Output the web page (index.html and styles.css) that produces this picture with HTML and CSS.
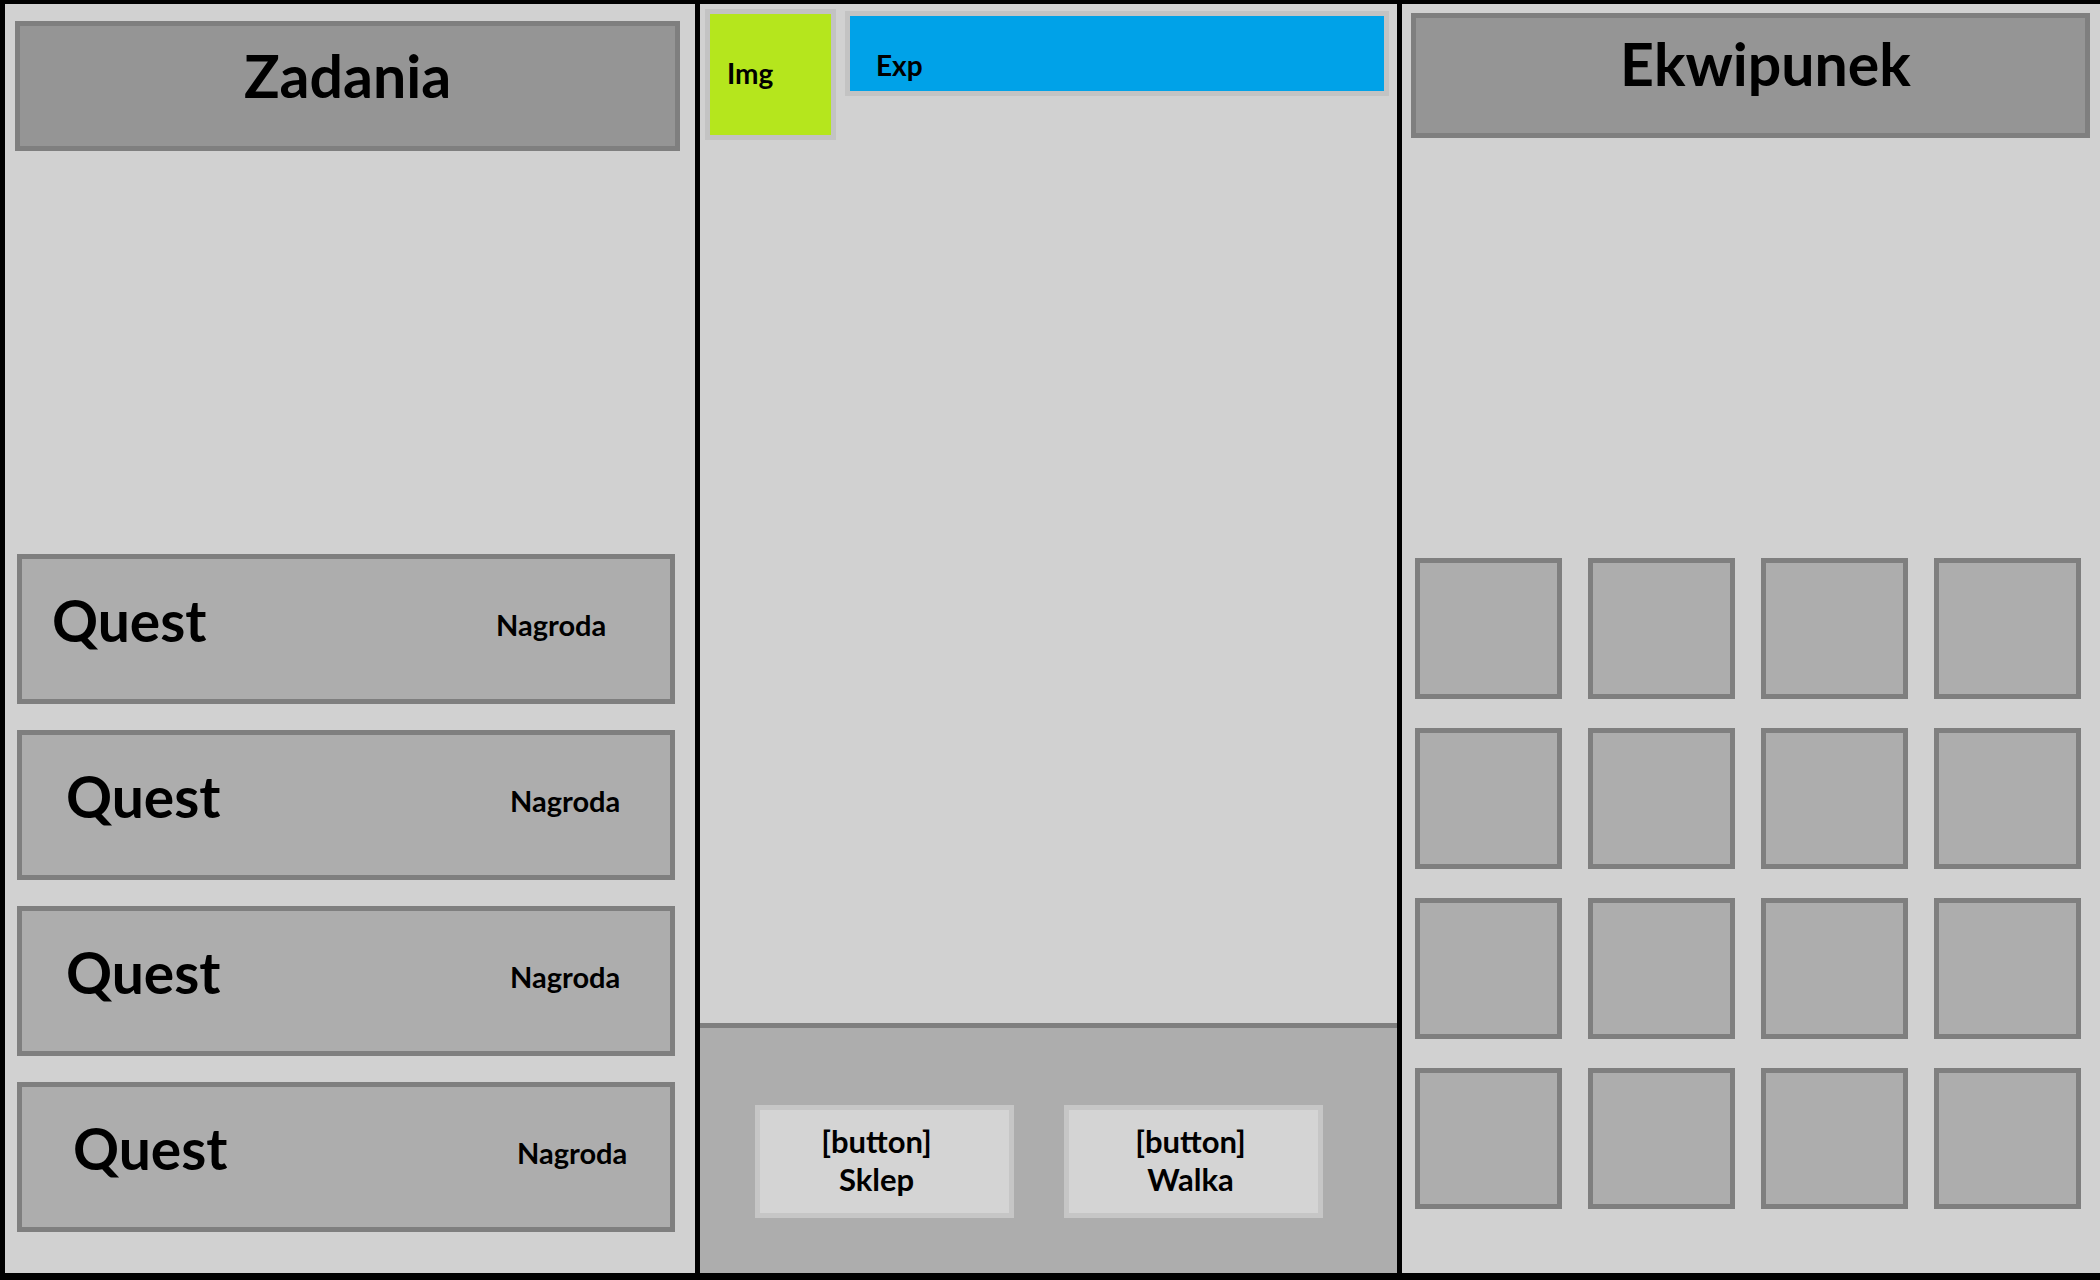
FILE: index.html
```html
<!DOCTYPE html>
<html lang="pl">
<head>
<meta charset="utf-8">
<title>Gra - makieta</title>
<link rel="stylesheet" href="styles.css">
</head>
<body>
<div class="app">
  <section class="col col-left">
    <header class="panel-title title-quests">Zadania</header>
    <div class="quests">
      <div class="quest q1"><span class="quest-name">Quest</span><span class="quest-reward">Nagroda</span></div>
      <div class="quest q2"><span class="quest-name">Quest</span><span class="quest-reward">Nagroda</span></div>
      <div class="quest q3"><span class="quest-name">Quest</span><span class="quest-reward">Nagroda</span></div>
      <div class="quest q4"><span class="quest-name">Quest</span><span class="quest-reward">Nagroda</span></div>
    </div>
  </section>
  <section class="col col-mid">
    <div class="hero">
      <div class="avatar">Img</div>
      <div class="exp">Exp</div>
    </div>
    <div class="actions">
      <div class="btn btn-shop">[button]<br>Sklep</div>
      <div class="btn btn-fight">[button]<br>Walka</div>
    </div>
  </section>
  <section class="col col-right">
    <header class="panel-title title-inv">Ekwipunek</header>
    <div class="inventory">
      <div class="slot"></div><div class="slot"></div><div class="slot"></div><div class="slot"></div>
      <div class="slot"></div><div class="slot"></div><div class="slot"></div><div class="slot"></div>
      <div class="slot"></div><div class="slot"></div><div class="slot"></div><div class="slot"></div>
      <div class="slot"></div><div class="slot"></div><div class="slot"></div><div class="slot"></div>
    </div>
  </section>
</div>
</body>
</html>
```
FILE: styles.css
```css
* { box-sizing: border-box; }

html, body {
  margin: 0;
  padding: 0;
  background: #d1d1d1;
}

body {
  font-family: Lato, "Open Sans", "Noto Sans", sans-serif;
  font-weight: 700;
  color: #000;
}

.app {
  display: flex;
  width: 2100px;
  height: 1280px;
  border-top: 4px solid #000;
  border-left: 5px solid #000;
  border-bottom: 7px solid #000;
  background: #d1d1d1;
}

.col {
  display: flex;
  flex-direction: column;
  height: 100%;
}

.col-left {
  width: 695px;
  border-right: 5px solid #000;
}

.col-mid {
  width: 702px;
  border-right: 5px solid #000;
}

.col-right {
  width: 698px;
}

/* titles */
.panel-title {
  display: flex;
  align-items: center;
  justify-content: center;
  background: #959595;
  border: 5px solid #7f7f7f;
  font-size: 59px;
  line-height: 1.2;
}

.title-quests {
  height: 130px;
  margin: 17px 15px 0 10px;
  padding-bottom: 20px;
}

.title-inv {
  height: 125px;
  margin: 9px 10px 0 9px;
  padding-bottom: 23px;
  padding-left: 30px;
}

/* quests */
.quests {
  margin-top: auto;
  display: flex;
  flex-direction: column;
  gap: 26px;
  padding: 0 20px 41px 12px;
}

.quest {
  height: 150px;
  display: flex;
  align-items: center;
  background: #adadad;
  border: 5px solid #7f7f7f;
}

.q1 { padding-left: 30px; }
.q2 { padding-left: 44px; }
.q3 { padding-left: 44px; }
.q4 { padding-left: 51px; }

.quest-name {
  width: 444px;
  flex: none;
  font-size: 57px;
  line-height: 1.2;
  padding-bottom: 18px;
}

.quest-reward {
  font-size: 29px;
  line-height: 1.2;
  padding-bottom: 8px;
}

/* middle */
.hero {
  display: flex;
  align-items: flex-start;
  gap: 9px;
  padding: 5px 8px 0 5px;
}

.avatar {
  width: 131px;
  height: 131px;
  flex: none;
  display: flex;
  align-items: center;
  padding: 0 0 2px 17px;
  background: #b5e61d;
  border: 5px solid #c3c3c3;
  font-size: 28px;
  line-height: 1.2;
}

.exp {
  flex: 1;
  height: 85px;
  margin-top: 2px;
  display: flex;
  align-items: flex-end;
  padding: 0 0 8px 26px;
  background: #00a2e8;
  border: 5px solid #c3c3c3;
  font-size: 28px;
  line-height: 1.2;
}

.actions {
  margin-top: auto;
  height: 250px;
  display: flex;
  align-items: flex-start;
  gap: 50px;
  padding: 77px 0 0 55px;
  background: #adadad;
  border-top: 5px solid #7f7f7f;
}

.btn {
  width: 259px;
  height: 113px;
  display: flex;
  align-items: center;
  justify-content: center;
  text-align: center;
  padding-bottom: 3px;
  background: #d4d4d4;
  border: 5px solid #c6c6c6;
  font-size: 31px;
  line-height: 38px;
}

.btn-shop { padding-right: 16px; }
.btn-fight { padding-right: 6px; }

/* inventory */
.inventory {
  margin-top: auto;
  display: grid;
  grid-template-columns: repeat(4, 147px);
  grid-auto-rows: 141px;
  column-gap: 26px;
  row-gap: 29px;
  padding: 0 19px 64px 13px;
}

.slot {
  background: #adadad;
  border: 5px solid #7f7f7f;
}
```
